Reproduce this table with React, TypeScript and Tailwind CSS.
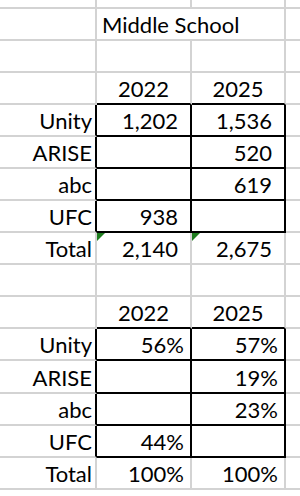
import type { ReactNode } from 'react';

type Row = {
    label?: string;
    a?: string;
    b?: string;
    kind?: 'title' | 'year' | 'box' | 'total' | 'blank';
    pad?: string;
    flag?: boolean;
    tall?: boolean;
};

const rows: Row[] = [
    { kind: 'title' },
    { kind: 'blank' },
    { kind: 'year', a: '2022', b: '2025' },
    { kind: 'box', label: 'Unity', a: '1,202', b: '1,536', pad: 'pr-[12px]' },
    { kind: 'box', label: 'ARISE', b: '520', pad: 'pr-[12px]' },
    { kind: 'box', label: 'abc', b: '619', pad: 'pr-[12px]' },
    { kind: 'box', label: 'UFC', a: '938', pad: 'pr-[12px]' },
    { kind: 'total', label: 'Total', a: '2,140', b: '2,675', pad: 'pr-[12px]', flag: true },
    { kind: 'blank' },
    { kind: 'year', a: '2022', b: '2025' },
    { kind: 'box', label: 'Unity', a: '56%', b: '57%', pad: 'pr-[6px]' },
    { kind: 'box', label: 'ARISE', b: '19%', pad: 'pr-[6px]', tall: true },
    { kind: 'box', label: 'abc', b: '23%', pad: 'pr-[6px]' },
    { kind: 'box', label: 'UFC', a: '44%', pad: 'pr-[6px]' },
    { kind: 'total', label: 'Total', a: '100%', b: '100%', pad: 'pr-[6px]' },
];

// little green "number stored as text" marker Excel puts in the corner
function Flag() {
    return (
        <svg className="absolute left-0 top-0" width="8" height="8" viewBox="0 0 8 8">
            <polygon points="0,0 8,0 0,8" fill="#1f7d1f" />
        </svg>
    );
}

function Cell({ children, className = '' }: { children?: ReactNode; className?: string }) {
    return (
        <div className={`relative flex items-end pb-[3px] border-b-2 border-r-2 whitespace-nowrap ${className}`}>
            {children}
        </div>
    );
}

export default function App() {
    const grey = 'border-[#d3d3d3]';

    return (
        <div className="w-[300px] h-[496px] overflow-hidden bg-white text-black text-[22px] leading-none font-['Lato','Liberation_Sans',sans-serif]">
            {/* partial row above the sheet area */}
            <div className="grid grid-cols-[97px_95px_94px_1fr] h-[9px]">
                <div className={`border-b-2 border-r-2 ${grey}`} />
                <div className={`border-b-2 border-r-2 ${grey}`} />
                <div className={`border-b-2 border-r-2 ${grey}`} />
                <div className={`border-b-2 ${grey}`} />
            </div>

            {rows.map((r, i) => {
                const box = r.kind === 'box';
                const year = r.kind === 'year';
                const h = r.tall ? 'h-[33px]' : 'h-8';

                if (r.kind === 'title') {
                    return (
                        <div key={i} className={`grid grid-cols-[97px_95px_94px_1fr] ${h}`}>
                            <Cell className={grey} />
                            <Cell className={`col-span-2 pl-[5px] ${grey}`}>Middle School</Cell>
                            <div className={`border-b-2 ${grey}`} />
                        </div>
                    );
                }

                const dataBorder = box || year ? 'border-b-black' : 'border-b-[#d3d3d3]';
                const sideBorder = box ? 'border-r-black' : 'border-r-[#d3d3d3]';

                return (
                    <div key={i} className={`grid grid-cols-[97px_95px_94px_1fr] ${h}`}>
                        <Cell className={`justify-end pr-[3px] border-b-[#d3d3d3] ${sideBorder}`}>{r.label}</Cell>
                        <Cell className={`${year ? 'justify-center' : `justify-end ${r.pad ?? ''}`} ${dataBorder} ${sideBorder}`}>
                            {r.flag && <Flag />}
                            {r.a}
                        </Cell>
                        <Cell className={`${year ? 'justify-center' : `justify-end ${r.pad ?? ''}`} ${dataBorder} ${sideBorder}`}>
                            {r.flag && <Flag />}
                            {r.b}
                        </Cell>
                        <div className={`border-b-2 ${grey}`} />
                    </div>
                );
            })}
        </div>
    );
}
